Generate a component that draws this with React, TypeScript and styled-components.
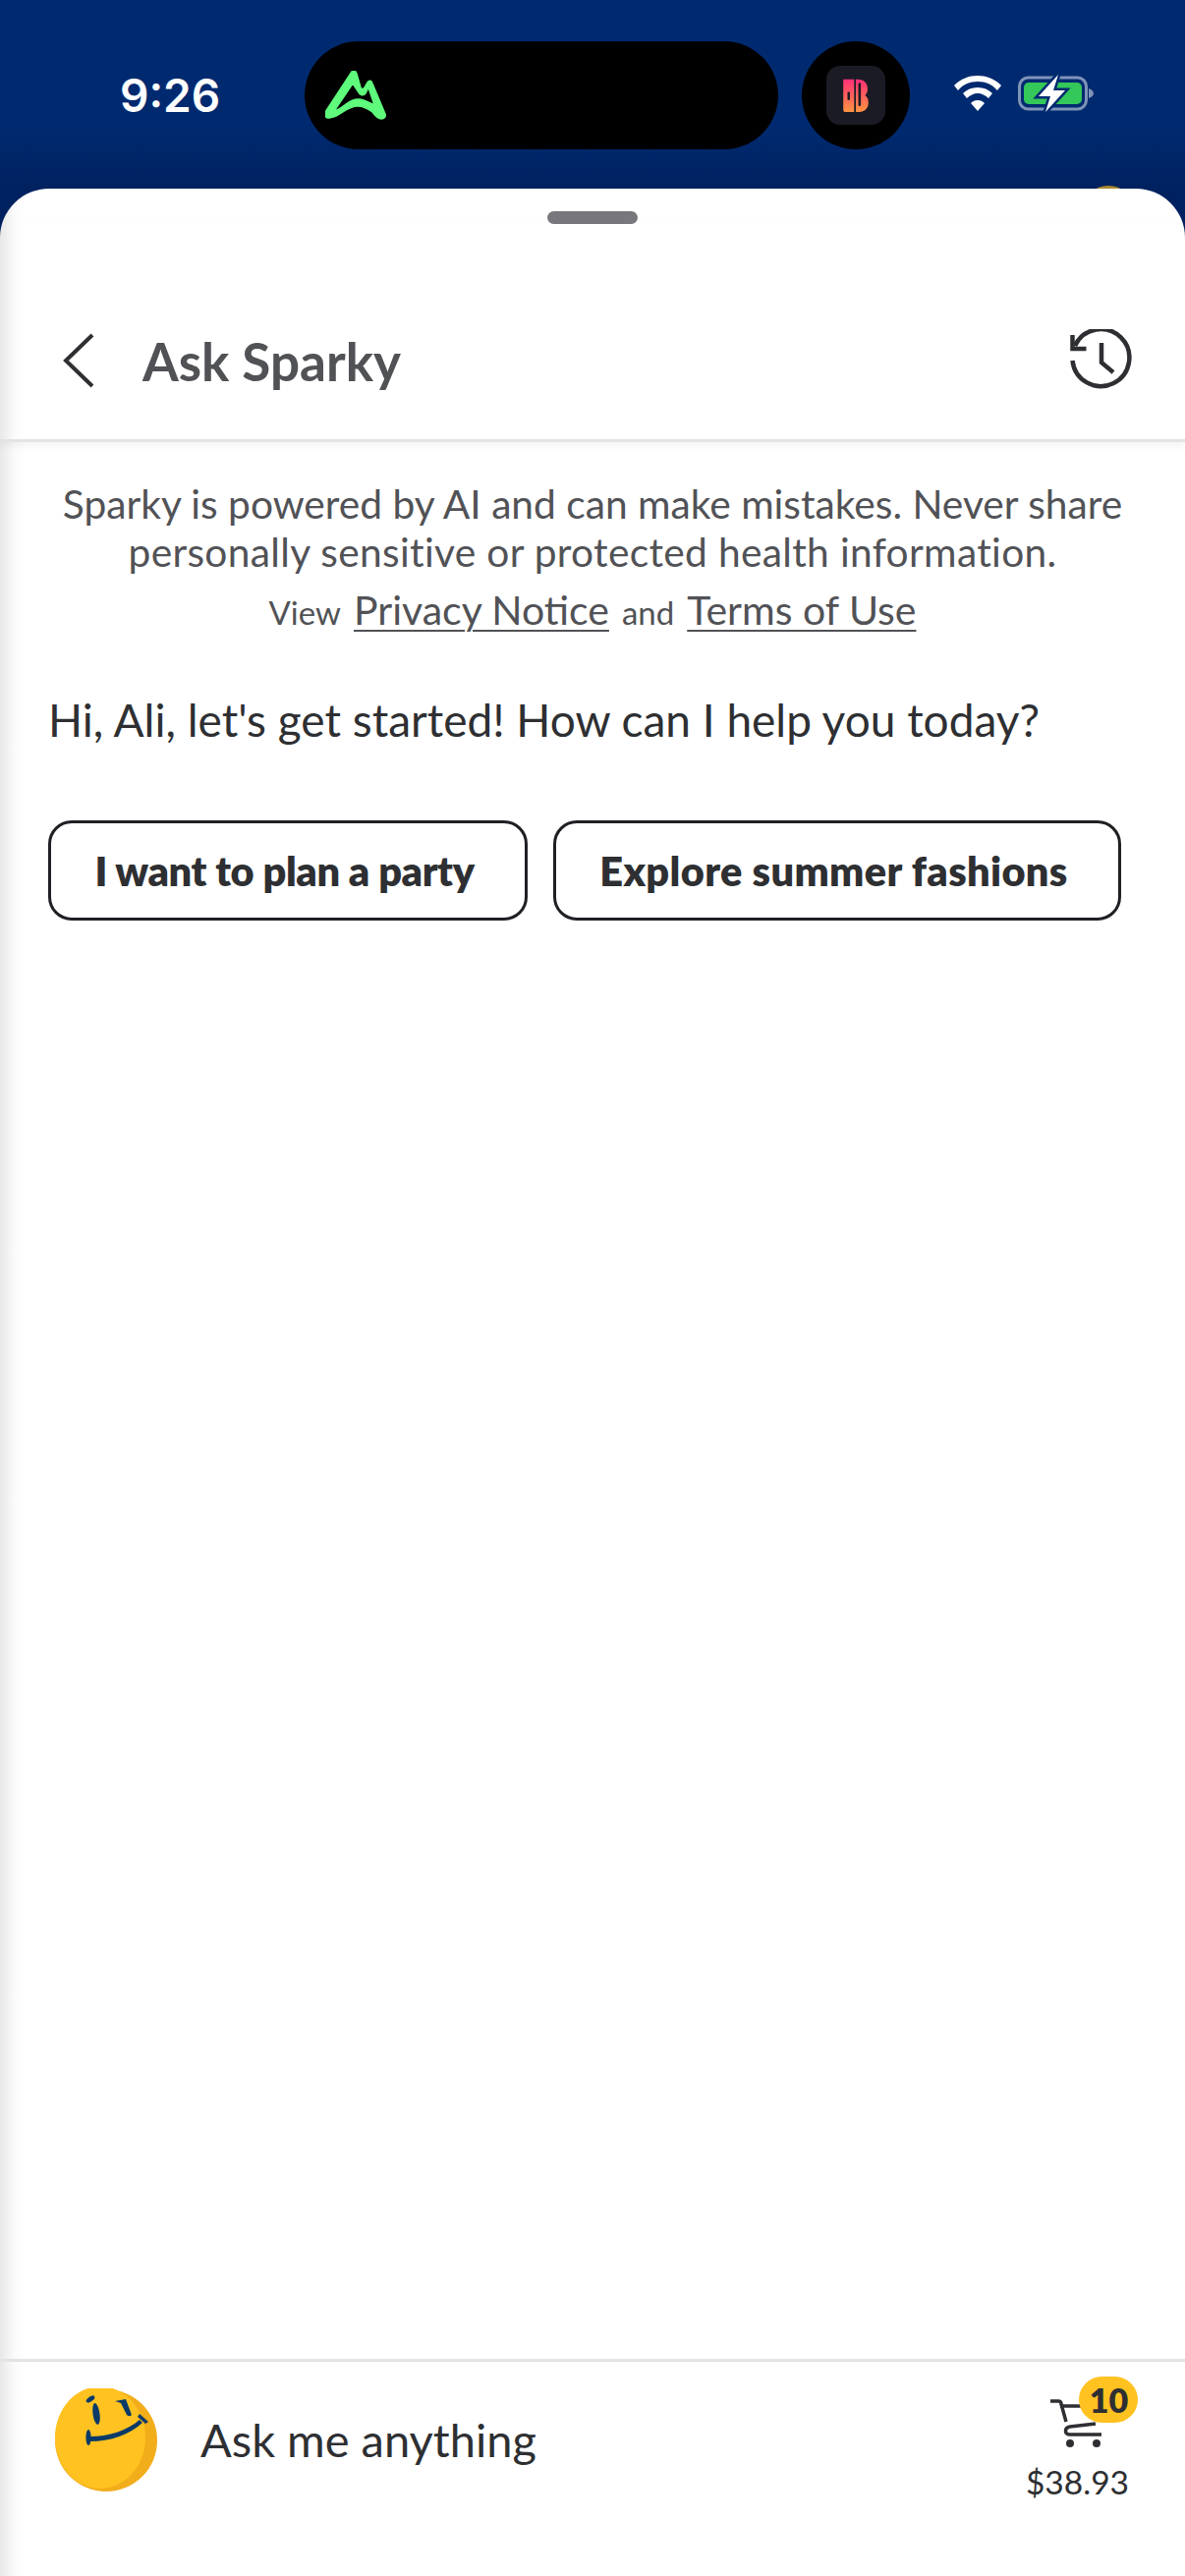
import React from "react";
import styled, { createGlobalStyle } from "styled-components";

const GlobalStyle = createGlobalStyle`
  html, body { margin: 0; padding: 0; background: #fff; }
  body { font-family: "Lato", "Noto Sans", sans-serif; }
`;

const App = () => {
  return (
    <Screen>
      <GlobalStyle />
      <StatusBar>
        <Time>9:26</Time>
        <Island>
          <svg width="62" height="50" viewBox="0 0 62 50">
            <path
              fill="#5ffb7c"
              stroke="#5ffb7c"
              strokeWidth="1.5"
              fillRule="evenodd"
              d="M27 1c2-2 4-1 5 2l4 14c1 2 3 2 4 0l3-5c2-3 4-2 5 1l13 31c1 3-1 5-4 5-3 0-6-3-9-7-4-3-8-6-15-6-8 0-13 5-22 10-3 1-6 2-8 2-3 0-4-3-3-6ZM28 13 9 41c5-1 8-4 12-7 4-3 8-5 13-5 6 0 11 4 16 6L44 17l-3 6c-2 3-6 2-7-1Z"
            />
          </svg>
        </Island>
        <AppBubble>
          <AppTile>
            <svg width="30" height="54" viewBox="0 0 30 54">
              <defs>
                <linearGradient id="tile" x1="0" y1="0" x2="0" y2="1">
                  <stop offset="0" stopColor="#ff2f78" />
                  <stop offset="1" stopColor="#ff9440" />
                </linearGradient>
              </defs>
              <path
                fill="url(#tile)"
                d="M0 8h17c8 0 12 5 12 11 0 4-1 6-3 8 3 2 4 5 4 9 0 7-5 11-13 11H3c-2 0-3-1-3-3V8Z"
              />
              <rect x="13" y="0" width="2" height="52" fill="#1b1b25" />
              <rect x="5" y="23" width="3" height="10" rx="1.5" fill="#1b1b25" />
              <rect x="18" y="12" width="3" height="28" rx="1.5" fill="#1b1b25" />
            </svg>
          </AppTile>
        </AppBubble>
        <SystemIcons>
          <svg width="48" height="36" viewBox="0 0 48 36">
            <path
              fill="#fff"
              d="M24 0c9 0 17 3 24 10l-4 5c-5-6-12-9-20-9S9 9 4 15l-4-5C7 3 15 0 24 0Zm0 12c6 0 11 2 15 6l-4 5c-3-3-7-5-11-5s-8 2-11 5l-4-5c4-4 9-6 15-6Zm0 13c3 0 5 1 7 3l-7 8-7-8c2-2 4-3 7-3Z"
            />
          </svg>
          <svg width="78" height="38" viewBox="0 0 78 38">
            <rect x="1.5" y="3" width="68" height="32" rx="9" fill="none" stroke="#7f93b8" strokeWidth="3" />
            <rect x="6" y="8" width="59" height="22" rx="5" fill="#34c759" />
            <path d="M72 14c3 1 5 3 5 5s-2 4-5 5Z" fill="#7f93b8" />
            <path
              d="M41 0 21 22h12l-5 16 20-22H36Z"
              fill="#fff"
              stroke="#002a70"
              strokeWidth="5"
              paintOrder="stroke"
            />
          </svg>
        </SystemIcons>
      </StatusBar>

      <PeekDot />

      <Sheet>
        <Handle />
        <Header>
          <HeaderLeft>
            <svg width="34" height="56" viewBox="0 0 34 56">
              <path d="M31 2 4 28l27 26" fill="none" stroke="#2e2f32" strokeWidth="4" />
            </svg>
            <Title>Ask Sparky</Title>
          </HeaderLeft>
          <svg width="64" height="64" viewBox="0 0 64 64">
            <g fill="none" stroke="#2e2f32" strokeWidth="4.5">
              <path d="M5 17a29 29 0 1 1-2.500 15" />
              <path d="M2.500 6v14h14" />
              <path d="M32 14v20l12 10" />
            </g>
          </svg>
        </Header>

        <Content>
          <Notice>
            Sparky is powered by AI and can make mistakes. Never share
            <br />
            <NoticeWide>personally sensitive or protected health information.</NoticeWide>
          </Notice>
          <LegalRow>
            <span>View</span>
            <LegalLink>Privacy Notice</LegalLink>
            <span>and</span>
            <LegalLink>Terms of Use</LegalLink>
          </LegalRow>
          <Greeting>Hi, Ali, let's get started! How can I help you today?</Greeting>
          <Suggestions>
            <Suggestion $width={488} $tracking={-0.4}>
              I want to plan a party
            </Suggestion>
            <Suggestion $width={578} $tracking={0.35}>
              Explore summer fashions
            </Suggestion>
          </Suggestions>
        </Content>

        <BottomBar>
          <svg width="104" height="106" viewBox="0 0 104 106">
            <circle cx="52" cy="53" r="52" fill="#f2ad1a" />
            <ellipse cx="46" cy="50" rx="46" ry="52" fill="#ffc220" />
            <g fill="#0a3a68">
              <ellipse cx="36" cy="11" rx="5" ry="2.4" transform="rotate(-35 36 11)" />
              <ellipse cx="42" cy="26" rx="3.5" ry="11" transform="rotate(-8 42 26)" />
              <path d="M61 13 72 11 78 27c-2 2-4 1-5 0L67 15Z" />
              <ellipse cx="34" cy="50" rx="2.6" ry="8" />
              <path d="M35 49c20 0 38-6 51-17l3 3C76 47 57 54 35 54Z" />
              <path d="M86 26 95 34 92 36 84 29Z" />
            </g>
          </svg>
          <InputHint>Ask me anything</InputHint>
          <CartBlock>
            <CartIconWrap>
              <svg width="54" height="50" viewBox="0 0 54 50">
                <g fill="none" stroke="#2e2f32" strokeWidth="3.5">
                  <path d="M0 2h8c2 0 3 1 3 3l5 18" />
                  <path d="M10 7h24" />
                  <path d="M46 25 20 28c-6 1-6 8 0 8h32" />
                </g>
                <circle cx="20" cy="45" r="4" fill="#2e2f32" />
                <circle cx="47" cy="45" r="4" fill="#2e2f32" />
              </svg>
              <CartBadge>10</CartBadge>
            </CartIconWrap>
            <CartPrice>$38.93</CartPrice>
          </CartBlock>
        </BottomBar>
      </Sheet>
    </Screen>
  );
};

export default App;

const Screen = styled.div`
  position: relative;
  width: 1206px;
  height: 2622px;
  display: flex;
  flex-direction: column;
  overflow: hidden;
  background: linear-gradient(to bottom, #002a70 0, #002a70 130px, #00215f 192px);
`;

const StatusBar = styled.div`
  height: 192px;
  flex: none;
  box-sizing: border-box;
  padding: 42px 0 40px 122px;
  display: flex;
  align-items: center;
`;

const Time = styled.div`
  width: 188px;
  color: #fff;
  font-family: "Inter", "Liberation Sans", sans-serif;
  font-weight: 600;
  font-size: 46px;
`;

const Island = styled.div`
  width: 482px;
  height: 110px;
  box-sizing: border-box;
  padding-left: 21px;
  border-radius: 55px;
  background: #000;
  display: flex;
  align-items: center;
`;

const AppBubble = styled.div`
  width: 110px;
  height: 110px;
  margin-left: 24px;
  border-radius: 50%;
  background: #000;
  display: flex;
  align-items: center;
  justify-content: center;
`;

const AppTile = styled.div`
  width: 60px;
  height: 60px;
  border-radius: 14px;
  background: #1b1b25;
  display: flex;
  align-items: center;
  justify-content: center;
  svg {
    height: 46px;
  }
`;

const SystemIcons = styled.div`
  margin-left: 45px;
  display: flex;
  align-items: center;
  gap: 17px;
  margin-top: -4px;
`;

const PeekDot = styled.div`
  position: absolute;
  top: 189px;
  left: 1114px;
  width: 28px;
  height: 12px;
  border-radius: 50%;
  background: #a98a2c;
`;

const Sheet = styled.div`
  position: relative;
  flex: 1;
  display: flex;
  flex-direction: column;
  border-radius: 50px 50px 0 0;
  background: linear-gradient(to right, #e8e8e8 0, #fafafa 14px, #fff 26px);
  min-height: 0;
`;

const Handle = styled.div`
  flex: none;
  width: 92px;
  height: 13px;
  margin: 23px auto 0;
  border-radius: 7px;
  background: #77777c;
`;

const Header = styled.div`
  flex: none;
  height: 222px;
  box-sizing: border-box;
  padding: 59px 53px 0 63px;
  display: flex;
  align-items: center;
  justify-content: space-between;
  border-bottom: 3px solid #e3e3e3;
  box-shadow: 0 4px 8px rgba(0, 0, 0, 0.05);
`;

const HeaderLeft = styled.div`
  display: flex;
  align-items: center;
  gap: 48px;
`;

const Title = styled.div`
  color: #515256;
  font-weight: 700;
  font-size: 53px;
`;

const Content = styled.div`
  flex: 1;
  min-height: 0;
  padding: 38px 49px 0;
  display: flex;
  flex-direction: column;
`;

const Notice = styled.p`
  margin: 0;
  color: #515256;
  font-size: 40.7px;
  line-height: 49px;
  text-align: center;
  white-space: nowrap;
`;

const NoticeWide = styled.span`
  letter-spacing: 0.32px;
`;

const LegalRow = styled.div`
  margin-top: 10px;
  display: flex;
  align-items: baseline;
  justify-content: center;
  gap: 13px;
  color: #515256;
  font-size: 33px;
  line-height: 50px;
`;

const LegalLink = styled.span`
  font-size: 41px;
  text-decoration: underline;
  text-underline-offset: 5px;
  text-decoration-thickness: 2px;
`;

const Greeting = styled.p`
  margin: 57px 0 0;
  color: #2e2f32;
  font-size: 46px;
  line-height: 56px;
`;

const Suggestions = styled.div`
  margin-top: 74px;
  display: flex;
  gap: 26px;
`;

const Suggestion = styled.div<{ $width: number; $tracking: number }>`
  width: ${(p) => p.$width}px;
  height: 102px;
  box-sizing: border-box;
  padding-right: 7px;
  border: 3px solid #1f2024;
  border-radius: 24px;
  background: #fff;
  color: #2e2f32;
  font-weight: 800;
  font-size: 41.5px;
  letter-spacing: ${(p) => p.$tracking}px;
  display: flex;
  align-items: center;
  justify-content: center;
`;

const BottomBar = styled.div`
  flex: none;
  height: 221px;
  box-sizing: border-box;
  border-top: 3px solid #e3e3e3;
  padding: 0 57px 0 56px;
  display: flex;
  align-items: flex-start;
  svg {
    flex: none;
  }
  > svg {
    margin-top: 27px;
  }
`;

const InputHint = styled.div`
  flex: 1;
  margin: 49px 0 0 44px;
  color: #2e2f32;
  font-size: 47px;
  line-height: 60px;
`;

const CartBlock = styled.div`
  display: flex;
  flex-direction: column;
  align-items: center;
  padding-top: 38px;
`;

const CartIconWrap = styled.div`
  position: relative;
  width: 54px;
  height: 50px;
`;

const CartBadge = styled.div`
  position: absolute;
  top: -23px;
  left: 29px;
  width: 60px;
  height: 47px;
  border-radius: 24px;
  background: #ffc220;
  color: #2e2f32;
  font-weight: 800;
  font-size: 34px;
  display: flex;
  align-items: center;
  justify-content: center;
`;

const CartPrice = styled.div`
  margin-top: 14px;
  color: #2e2f32;
  font-size: 33.5px;
  line-height: 40px;
`;
